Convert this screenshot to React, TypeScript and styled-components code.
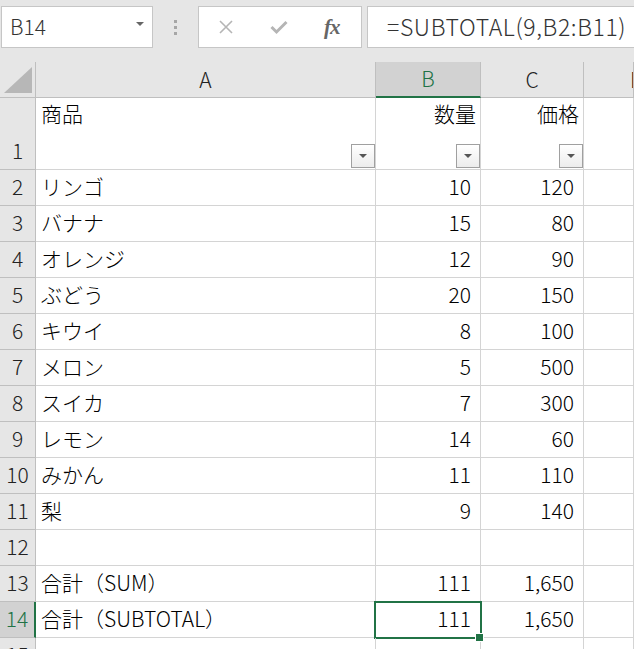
import React, { FC } from 'react';
import styled, { createGlobalStyle } from 'styled-components';

const GlobalStyle = createGlobalStyle`
  html, body {
    margin: 0;
    padding: 0;
    background: #fff;
    overflow: hidden;
  }
`;

const FONT = `"Noto Sans CJK JP", "Noto Sans", sans-serif`;
const GREEN = '#217346';
const GRID = '#d4d4d4';

const Toolbar = styled.div`
  display: flex;
  align-items: flex-start;
  height: 62px;
  box-sizing: border-box;
  padding: 6px 0 0 1px;
  background-color: #e6e6e6;
  font-family: ${FONT};
  font-weight: 300;
`;

const NameBox = styled.div`
  display: flex;
  align-items: center;
  justify-content: space-between;
  width: 152px;
  height: 42px;
  box-sizing: border-box;
  padding: 0 8px 2px 8px;
  border: 1px solid #c6c6c6;
  background-color: #fff;
  color: #333;
  font-size: 21px;

  .caret {
    width: 0;
    height: 0;
    margin-bottom: 4px;
    border-left: 4px solid transparent;
    border-right: 4px solid transparent;
    border-top: 4px solid #666;
  }
`;

const Grip = styled.div`
  display: flex;
  flex-direction: column;
  gap: 3px;
  width: 45px;
  align-items: center;
  padding-top: 14px;

  span {
    width: 3px;
    height: 3px;
    background-color: #a6a6a6;
  }
`;

const FormulaButtons = styled.div`
  display: flex;
  align-items: center;
  gap: 36px;
  width: 164px;
  height: 42px;
  box-sizing: border-box;
  padding: 0 0 0 19px;
  border: 1px solid #c6c6c6;
  background-color: #fff;

  .fx {
    font-family: "Liberation Serif", serif;
    font-style: italic;
    font-weight: bold;
    font-size: 21px;
    color: #666;
    letter-spacing: -1px;
  }
`;

const FormulaInput = styled.div`
  display: flex;
  align-items: center;
  flex: 1;
  height: 42px;
  box-sizing: border-box;
  margin-left: 5px;
  padding: 0 0 2px 19px;
  border: 1px solid #c6c6c6;
  border-right: none;
  background-color: #fff;
  color: #333;
  font-size: 23px;
  letter-spacing: 0.6px;
  white-space: nowrap;
  overflow: hidden;
`;

const Sheet = styled.div`
  display: grid;
  grid-template-columns: 36px 340px 105px 103px 1fr;
  grid-template-rows: 36px 72px repeat(14, 36px);
  font-family: ${FONT};
  font-weight: 300;
  font-size: 21px;
  color: #000;
`;

const Corner = styled.div`
  display: flex;
  align-items: flex-end;
  justify-content: flex-end;
  box-sizing: border-box;
  padding: 0 3px 4px 0;
  background-color: #e6e6e6;
  border-right: 1px solid #bfbfbf;
  border-bottom: 1px solid #bfbfbf;

  .tri {
    width: 0;
    height: 0;
    border-left: 28px solid transparent;
    border-bottom: 26px solid #b7b7b7;
  }
`;

const ColHeader = styled.div<{ $selected?: boolean; $edge?: boolean }>`
  display: flex;
  align-items: center;
  justify-content: ${(p) => (p.$edge ? 'flex-start' : 'center')};
  box-sizing: border-box;
  padding-left: ${(p) => (p.$edge ? '46px' : '0')};
  padding-bottom: 2px;
  background-color: ${(p) => (p.$selected ? '#d2d2d2' : '#e6e6e6')};
  color: ${(p) => (p.$selected ? GREEN : '#222')};
  border-right: 1px solid #bfbfbf;
  border-bottom: ${(p) => (p.$selected ? `2px solid ${GREEN}` : '1px solid #bfbfbf')};
  overflow: hidden;
  white-space: nowrap;
  font-size: 21px;
`;

const RowHeader = styled.div<{ $selected?: boolean; $bottom?: boolean }>`
  display: flex;
  align-items: ${(p) => (p.$bottom ? 'flex-end' : 'center')};
  justify-content: center;
  box-sizing: border-box;
  padding-bottom: ${(p) => (p.$bottom ? '4px' : '3px')};
  background-color: ${(p) => (p.$selected ? '#d2d2d2' : '#e6e6e6')};
  color: ${(p) => (p.$selected ? GREEN : '#222')};
  border-right: ${(p) => (p.$selected ? `2px solid ${GREEN}` : '1px solid #bfbfbf')};
  border-bottom: 1px solid #bfbfbf;
`;

const Cell = styled.div<{ $align?: 'left' | 'right'; $active?: boolean }>`
  position: relative;
  display: flex;
  align-items: center;
  justify-content: ${(p) => (p.$align === 'right' ? 'flex-end' : 'flex-start')};
  box-sizing: border-box;
  padding: 0 9px 3px 5px;
  border-right: 1px solid ${GRID};
  border-bottom: 1px solid ${GRID};
  white-space: nowrap;

  ${(p) =>
    p.$active &&
    `
    &::after {
      content: '';
      position: absolute;
      left: -2px;
      top: -1px;
      right: -2px;
      bottom: -2px;
      border: 2px solid ${GREEN};
      pointer-events: none;
    }
    .handle {
      position: absolute;
      right: -4px;
      bottom: -5px;
      width: 7px;
      height: 7px;
      background-color: ${GREEN};
      border: 1px solid #fff;
      z-index: 2;
    }
  `}
`;

const HeadCell = styled.div<{ $align?: 'left' | 'right' }>`
  display: flex;
  flex-direction: column;
  align-items: ${(p) => (p.$align === 'right' ? 'flex-end' : 'flex-start')};
  box-sizing: border-box;
  padding: 0 0 1px 5px;
  border-right: 1px solid ${GRID};
  border-bottom: 1px solid ${GRID};

  .label {
    padding-right: ${(p) => (p.$align === 'right' ? '4px' : '0')};
  }
`;

const FilterButton = styled.div`
  display: flex;
  align-items: center;
  justify-content: center;
  align-self: flex-end;
  margin-top: auto;
  width: 24px;
  height: 24px;
  box-sizing: border-box;
  border: 1px solid #a0a0a0;
  background: linear-gradient(#ffffff, #ececec);

  &::before {
    content: '';
    width: 0;
    height: 0;
    border-left: 4px solid transparent;
    border-right: 4px solid transparent;
    border-top: 4px solid #555;
  }
`;

const rows: [string, string, string][] = [
  ['リンゴ', '10', '120'],
  ['バナナ', '15', '80'],
  ['オレンジ', '12', '90'],
  ['ぶどう', '20', '150'],
  ['キウイ', '8', '100'],
  ['メロン', '5', '500'],
  ['スイカ', '7', '300'],
  ['レモン', '14', '60'],
  ['みかん', '11', '110'],
  ['梨', '9', '140'],
  ['', '', ''],
  ['合計（SUM）', '111', '1,650'],
  ['合計（SUBTOTAL）', '111', '1,650'],
  ['', '', ''],
];

const CrossIcon: FC = () => (
  <svg width="16" height="16" viewBox="0 0 16 16">
    <path d="M2 2 L14 14 M14 2 L2 14" stroke="#b5b5b5" strokeWidth="1.6" fill="none" />
  </svg>
);

const CheckIcon: FC = () => (
  <svg width="18" height="16" viewBox="0 0 18 16">
    <path d="M1.5 8 L6.5 13 L16.5 3" stroke="#b5b5b5" strokeWidth="3" fill="none" />
  </svg>
);

const App: FC = () => {
  return (
    <>
      <GlobalStyle />
      <Toolbar>
        <NameBox>
          <span>B14</span>
          <span className="caret" />
        </NameBox>
        <Grip>
          <span />
          <span />
          <span />
        </Grip>
        <FormulaButtons>
          <CrossIcon />
          <CheckIcon />
          <span className="fx">fx</span>
        </FormulaButtons>
        <FormulaInput>=SUBTOTAL(9,B2:B11)</FormulaInput>
      </Toolbar>
      <Sheet>
        <Corner>
          <span className="tri" />
        </Corner>
        <ColHeader>A</ColHeader>
        <ColHeader $selected>B</ColHeader>
        <ColHeader>C</ColHeader>
        <ColHeader $edge>D</ColHeader>

        <RowHeader $bottom>1</RowHeader>
        <HeadCell>
          <span className="label">商品</span>
          <FilterButton />
        </HeadCell>
        <HeadCell $align="right">
          <span className="label">数量</span>
          <FilterButton />
        </HeadCell>
        <HeadCell $align="right">
          <span className="label">価格</span>
          <FilterButton />
        </HeadCell>
        <Cell />

        {rows.map(([name, qty, price], i) => {
          const n = i + 2;
          const active = n === 14;
          return (
            <React.Fragment key={n}>
              <RowHeader $selected={active}>{n}</RowHeader>
              <Cell>{name}</Cell>
              <Cell $align="right" $active={active}>
                {qty}
                {active && <span className="handle" />}
              </Cell>
              <Cell $align="right">{price}</Cell>
              <Cell />
            </React.Fragment>
          );
        })}
      </Sheet>
    </>
  );
};

export default App;
